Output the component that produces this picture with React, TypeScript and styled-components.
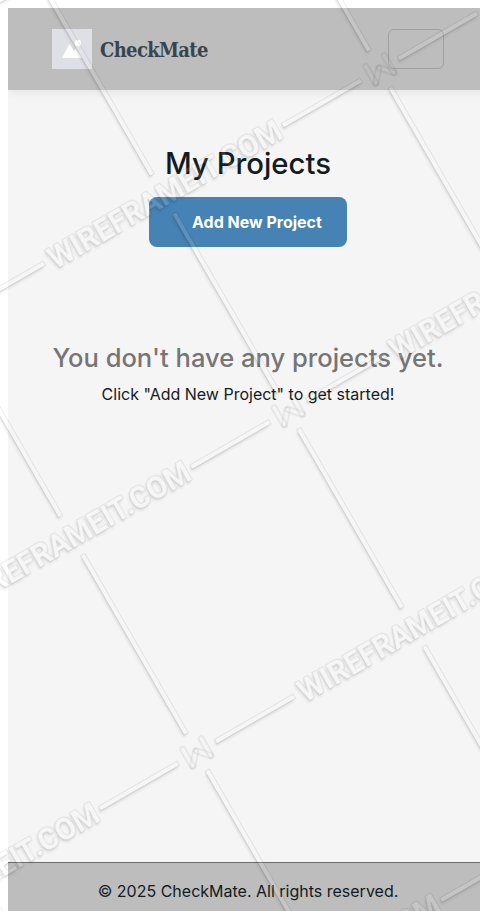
import React from "react";
import styled, { createGlobalStyle } from "styled-components";

const GlobalStyle = createGlobalStyle`
  * { box-sizing: border-box; }
  html { background: #fff; overflow: hidden; }
  body {
    margin: 8px 0 0 8px;
    font-family: Inter, sans-serif;
    font-size: 16px;
    line-height: 24px;
    color: #131b22;
  }
`;

const Page = styled.div`
  display: flex;
  flex-direction: column;
  width: 480px;
  height: 903px;
  background: #f5f5f5;
`;

const Navbar = styled.header`
  display: flex;
  align-items: center;
  justify-content: space-between;
  height: 82px;
  padding: 0 44px;
  background: #bdbdbd;
  box-shadow: 0 2px 10px rgba(0, 0, 0, 0.08);
`;

const Brand = styled.a`
  display: flex;
  align-items: center;
  gap: 8px;
`;

const Logo = styled.svg`
  display: block;
  width: 40px;
  height: 40px;
`;

const BrandName = styled.span`
  padding-top: 2px;
  font-family: "Roboto Slab", "DejaVu Serif Condensed", "DejaVu Serif", serif;
  font-size: 20px;
  font-weight: 700;
  line-height: 30px;
  letter-spacing: -0.65px;
  color: #36454f;
`;

const Toggler = styled.button`
  width: 56px;
  height: 40px;
  padding: 0;
  border: 1px solid #a0a0a0;
  border-radius: 6px;
  background: transparent;
`;

const Main = styled.main`
  flex: 1;
  display: flex;
  flex-direction: column;
  align-items: center;
  padding-top: 56px;
  text-align: center;
`;

const Title = styled.h1`
  margin: 0 0 15px;
  font-size: 29.3px;
  font-weight: 500;
  line-height: 36px;
`;

const AddButton = styled.button`
  width: 198px;
  height: 50px;
  padding: 0 25px 0 43px;
  border: 0;
  border-radius: 8px;
  background: #4682b4;
  color: #fff;
  font: 700 16px/24px Inter, sans-serif;
  text-align: left;
  white-space: nowrap;
`;

const EmptyTitle = styled.h2`
  margin: 94px 0 7px;
  font-size: 25.55px;
  font-weight: 500;
  line-height: 34px;
  color: #757575;
  white-space: nowrap;
`;

const EmptyText = styled.p`
  margin: 0;
`;

const Footer = styled.footer`
  height: 49px;
  padding-top: 16px;
  border-top: 1px solid #6c6c6c;
  background: #bdbdbd;
  text-align: center;
`;

const Overlay = styled.svg`
  position: absolute;
  top: 0;
  left: 0;
  width: 480px;
  height: 911px;
  pointer-events: none;
`;

const PITCH = 250;
const ORIGIN = { x: 288.4, y: 411 };
const COS = Math.cos(Math.PI / 6);
const SIN = 0.5;

type Node = { x: number; y: number; mark: boolean };

/* Lattice nodes near the visible page: marks and captions alternate. */
const nodes: Node[] = [];
for (let i = -4; i <= 4; i++) {
  for (let j = -4; j <= 4; j++) {
    const x = i * PITCH;
    const y = j * PITCH;
    const px = ORIGIN.x + x * COS + y * SIN;
    const py = ORIGIN.y - x * SIN + y * COS;
    const mark = (i + j) % 2 === 0;
    const mx = mark ? 200 : 112;
    const my = mark ? 230 : 70;
    if (px > -mx && px < 480 + mx && py > -my && py < 911 + my) {
      nodes.push({ x, y, mark });
    }
  }
}

function Bars() {
  return (
    <>
      <rect x="22" y="-2" width="90" height="4" />
      <rect x="-112" y="-2" width="90" height="4" />
      <rect x="-2" y="21" width="4" height="206" />
      <rect x="-2" y="-228" width="4" height="206" />
    </>
  );
}

function Mark() {
  return (
    <g fill="none" stroke="#000" strokeOpacity="0.07" strokeWidth="1.6">
      <rect x="-13.3" y="-12.5" width="5.2" height="25" rx="2.6" />
      <rect x="8.1" y="-12.5" width="5.2" height="25" rx="2.6" />
      <rect x="-10.5" y="-2.6" width="20" height="5.2" rx="2.6" transform="translate(-6.3 5) rotate(-49) translate(2 0)" />
      <rect x="-9.5" y="-2.6" width="20" height="5.2" rx="2.6" transform="translate(6.3 5) rotate(49) translate(-2 0)" />
    </g>
  );
}

function Lattice() {
  return (
    <>
      {nodes.map(({ x, y, mark }) => (
        <g key={`${x}:${y}`} transform={`translate(${x} ${y})`}>
          {mark ? (
            <Bars />
          ) : (
            <text x="-131" y="11.3" textLength="265" lengthAdjust="spacingAndGlyphs">
              WIREFRAMEIT.COM
            </text>
          )}
        </g>
      ))}
    </>
  );
}

function Watermark() {
  return (
    <Overlay viewBox="0 0 480 911" aria-hidden="true">
      <defs>
        {/* Keeps a light face and adds a thin halo plus a soft shadow around it. */}
        <filter
          id="emboss"
          filterUnits="userSpaceOnUse"
          x="-700"
          y="-700"
          width="1500"
          height="1500"
          colorInterpolationFilters="sRGB"
        >
          <feMorphology in="SourceAlpha" operator="dilate" radius="1" result="fat" />
          <feComponentTransfer in="fat" result="halo">
            <feFuncA type="linear" slope="0.075" />
          </feComponentTransfer>
          <feGaussianBlur in="SourceAlpha" stdDeviation="1.4" />
          <feOffset dx="-2" dy="2.4" />
          <feComponentTransfer result="soft">
            <feFuncA type="linear" slope="0.1" />
          </feComponentTransfer>
          <feMerge result="dark">
            <feMergeNode in="soft" />
            <feMergeNode in="halo" />
          </feMerge>
          <feComposite in="dark" in2="SourceAlpha" operator="out" result="edge" />
          <feComponentTransfer in="SourceGraphic" result="face">
            <feFuncA type="linear" slope="0.12" />
          </feComponentTransfer>
          <feMerge>
            <feMergeNode in="edge" />
            <feMergeNode in="face" />
          </feMerge>
        </filter>
      </defs>
      <g
        transform={`translate(${ORIGIN.x} ${ORIGIN.y}) rotate(-30)`}
        fontFamily="Roboto, sans-serif"
        fontWeight="700"
        fontSize="31"
      >
        <g filter="url(#emboss)" fill="#fff">
          <Lattice />
        </g>
        {nodes
          .filter((n) => n.mark)
          .map((n) => (
            <g key={`${n.x}:${n.y}`} transform={`translate(${n.x} ${n.y})`}>
              <Mark />
            </g>
          ))}
      </g>
    </Overlay>
  );
}

export default function App() {
  return (
    <>
      <GlobalStyle />
      <Page>
        <Navbar>
          <Brand>
            <Logo viewBox="0 0 40 40">
              <rect width="40" height="40" fill="#dfe0e6" />
              <path d="M10 29L17.5 15L22 22L24 19.5L30 29Z" fill="#fff" />
              <circle cx="26" cy="14" r="3.2" fill="#fff" />
            </Logo>
            <BrandName>CheckMate</BrandName>
          </Brand>
          <Toggler aria-label="Toggle navigation" />
        </Navbar>
        <Main>
          <Title>My Projects</Title>
          <AddButton>Add New Project</AddButton>
          <EmptyTitle>You don't have any projects yet.</EmptyTitle>
          <EmptyText>Click "Add New Project" to get started!</EmptyText>
        </Main>
        <Footer>© 2025 CheckMate. All rights reserved.</Footer>
      </Page>
      <Watermark />
    </>
  );
}
